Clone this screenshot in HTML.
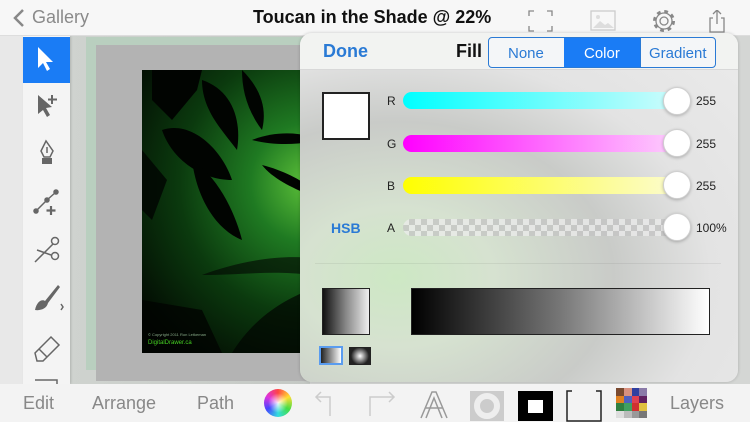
<!DOCTYPE html>
<html><head><meta charset="utf-8"><style>
*{margin:0;padding:0;box-sizing:border-box}
body{width:750px;height:422px;overflow:hidden;position:relative;background:#d4d6d4;font-family:"Liberation Sans",sans-serif}
.a{position:absolute}
.t{position:absolute;white-space:nowrap}
.track{position:absolute;left:403px;width:287px;height:17px;border-radius:9px}
.thumb{position:absolute;left:663px;width:28px;height:28px;border-radius:50%;background:#fff;border:1px solid #d0d0d0;box-shadow:0 1px 3px rgba(0,0,0,.25)}
.lbl{position:absolute;left:387px;font-size:12px;color:#222}
.val{position:absolute;left:696px;font-size:12px;color:#222}
</style></head><body>
<div class="a" style="left:70px;top:36px;width:240px;height:348px;background:linear-gradient(90deg,#cfd3cf,#c4c8c4)"></div>
<div class="a" style="left:86px;top:37px;width:220px;height:333px;background:#b9cfbf"></div>
<div class="a" style="left:96px;top:45px;width:214px;height:336px;background:#b3b3b3"></div>
<div class="a" style="left:142px;top:70px;width:168px;height:283px;background:radial-gradient(ellipse at 100% 40%,#5fc33a 0%,#1f7a22 25%,#0b3a0e 55%,#020802 90%)"></div>
<svg class="a" style="left:142px;top:70px" width="168" height="283">
<g fill="#010401">
<path d="M10 0 L60 0 L55 20 L30 50 L10 30 Z"/>
<path d="M60 10 C90 20 100 50 95 80 C80 60 60 40 60 10Z"/>
<path d="M20 60 C50 50 80 80 90 110 C60 110 30 90 20 60Z"/>
<path d="M50 90 C80 110 95 150 100 170 C75 160 55 130 50 90Z"/>
<path d="M100 0 C120 20 125 40 120 60 C105 40 100 20 100 0Z"/>
<path d="M110 70 C130 62 150 62 168 66 L168 72 C150 75 130 75 110 70Z"/>
<path d="M120 95 C140 100 160 110 168 118 L168 125 C150 118 130 108 120 95Z"/>
<path d="M0 80 L25 110 L10 150 L0 140Z" opacity=".8"/>
<path d="M60 205 C100 190 140 185 168 188 L168 205 C130 200 100 205 60 205Z" opacity=".6"/>
<path d="M90 283 C110 250 140 230 168 220 L168 283Z" opacity=".7"/>
<path d="M0 230 L60 240 L80 283 L0 283Z" opacity=".8"/>
</g>
<text x="6" y="266" font-size="4" fill="#8a8">© Copyright 2011 Ron Letkeman</text>
<text x="6" y="274" font-size="6" fill="#4c2">DigitalDrawer.ca</text>
</svg>
<div class="a" style="left:0;top:36px;width:23px;height:348px;background:#e8e8e8"></div>
<div class="a" style="left:23px;top:36px;width:47px;height:348px;background:#f4f4f4;box-shadow:1px 0 2px rgba(0,0,0,.15)"></div>
<div class="a" style="left:23px;top:37px;width:47px;height:46px;background:#1a7cf5"></div>
<svg class="a" style="left:23px;top:37px" width="47" height="348" fill="none" stroke="#666" stroke-width="1.5">
<path d="M15 10 L15 31 L20 26 L24 34 L27 32 L23 25 L30 25 Z" fill="#fff" stroke="none"/>
<path d="M15 58 L15 77 L20 73 L24 80 L27 78 L23 71 L29 70 Z" fill="#666" stroke="none"/>
<path d="M29 58v9M25 62.5h9" stroke="#666" stroke-width="2"/>
<path d="M23 104 L18 114 L21 120 L27 120 L30 114 Z M24 110v6"/><rect x="19" y="121" width="10" height="6" fill="#666" stroke="none"/>
<path d="M13 174 L24 163 L33 155"/><circle cx="13" cy="174" r="2" fill="#666"/><circle cx="24" cy="163" r="2" fill="#666"/><circle cx="33" cy="155" r="2" fill="#666"/>
<path d="M28 169v9M23.5 173.5h9" stroke="#666" stroke-width="2.2"/>
<path d="M12 225 L30 207 M14 213 L28 218" /><circle cx="32" cy="204" r="3.5"/><circle cx="32" cy="219" r="3.5"/>
<path d="M12 273 C14 264 19 262 22 264 L35 248 L37 250 L25 266 C24 271 18 274 12 273Z" fill="#666" stroke="none"/>
<path d="M38 267l2 3-2 3" />
<path d="M12 316 L28 300 L36 308 L20 324 L14 324 Z M16 312l8 8" />
<path d="M12 343h22v6" />
</svg>
<div class="a" style="left:0;top:0;width:750px;height:36px;background:#f7f7f7;border-bottom:1px solid #ddd"></div>
<svg class="a" style="left:12px;top:8px" width="14" height="20"><path d="M11 2 L3 10 L11 18" fill="none" stroke="#888" stroke-width="2.5"/></svg>
<div class="t" style="left:32px;top:7px;font-size:18px;color:#8a8a8a">Gallery</div>
<div class="t" style="left:253px;top:7px;font-size:18px;font-weight:bold;color:#111">Toucan in the Shade @ 22%</div>
<svg class="a" style="left:528px;top:10px" width="200" height="24" fill="none" stroke="#888" stroke-width="1.3">
<path d="M1 6V1h5M19 1h5v5M24 16v5h-5M6 21H1v-5"/>
<rect x="63" y="1" width="24" height="19" stroke="#ccc"/><path d="M65 18l7-7 5 4 3-2 6 5z" fill="#ddd" stroke="none"/><circle cx="70" cy="7" r="2" fill="#ddd" stroke="none"/>
<circle cx="136" cy="11" r="9.5" stroke-width="3" stroke-dasharray="3.7 3.76"/><circle cx="136" cy="11" r="8"/><circle cx="136" cy="11" r="4"/>
<path d="M185 8h-3v14h14V8h-3M189 14V0M185 4l4-4 4 4"/>
</svg>
<div class="a" style="left:300px;top:33px;width:438px;height:349px;border-radius:12px;overflow:hidden;background:radial-gradient(ellipse at 22% 70%,#cde8c4 0%,#d6e2d0 20%,#c9cbc8 45%,#e3e3e3 65%,#ebebeb 100%);box-shadow:0 0 3px rgba(0,0,0,.2)">
<div class="a" style="left:0;top:0;width:438px;height:37px;background:#f2f3f1;border-bottom:1px solid #d8d8d8"></div>
</div>
<div class="t" style="left:323px;top:41px;font-size:18px;font-weight:bold;color:#2a7ad5">Done</div>
<div class="t" style="left:456px;top:41px;font-size:18px;font-weight:bold;color:#111">Fill</div>
<div class="a" style="left:488px;top:37px;width:228px;height:31px;border:1px solid #2a7ad5;border-radius:4px;overflow:hidden;background:#f4f6f8">
<div class="a" style="left:75px;top:0;width:77px;height:31px;background:#1a7cf5"></div>
<div class="a" style="left:151px;top:0;width:1px;height:31px;background:#2a7ad5"></div>
<div class="t" style="left:19px;top:7px;font-size:15px;color:#2a7ad5">None</div>
<div class="t" style="left:95px;top:7px;font-size:15px;color:#fff">Color</div>
<div class="t" style="left:160px;top:7px;font-size:15px;color:#2a7ad5">Gradient</div>
</div>
<div class="a" style="left:322px;top:92px;width:48px;height:48px;background:#fff;border:2px solid #222"></div>
<div class="lbl" style="top:94px">R</div><div class="lbl" style="top:137px">G</div><div class="lbl" style="top:179px">B</div><div class="lbl" style="top:221px">A</div>
<div class="track" style="top:92px;background:linear-gradient(90deg,#0ff,#d8fbfb)"></div>
<div class="track" style="top:135px;background:linear-gradient(90deg,#f0f,#fdd8fd)"></div>
<div class="track" style="top:177px;background:linear-gradient(90deg,#ff0,#fbfbd8)"></div>
<div class="track" style="top:219px;background-color:#ececec;background-image:linear-gradient(45deg,#c4c4c4 25%,transparent 25%,transparent 75%,#c4c4c4 75%),linear-gradient(45deg,#c4c4c4 25%,transparent 25%,transparent 75%,#c4c4c4 75%);background-size:12px 12px;background-position:0 0,6px 6px;opacity:.75"></div>
<div class="thumb" style="top:87px"></div><div class="thumb" style="top:129px"></div><div class="thumb" style="top:171px"></div><div class="thumb" style="top:213px"></div>
<div class="val" style="top:94px">255</div><div class="val" style="top:137px">255</div><div class="val" style="top:179px">255</div><div class="val" style="top:221px">100%</div>
<div class="t" style="left:331px;top:220px;font-size:14px;font-weight:bold;color:#2a7ad5">HSB</div>
<div class="a" style="left:315px;top:263px;width:406px;height:1px;background:rgba(0,0,0,.06)"></div>
<div class="a" style="left:322px;top:288px;width:48px;height:47px;border:1px solid #222;background:linear-gradient(90deg,#111,#888,#eee)"></div>
<div class="a" style="left:411px;top:288px;width:299px;height:47px;border:1px solid #222;background:linear-gradient(90deg,#000,#777 50%,#fff)"></div>
<div class="a" style="left:319px;top:346px;width:24px;height:19px;border:2px solid #5a9cef;background:linear-gradient(90deg,#222,#fff)"></div>
<div class="a" style="left:349px;top:347px;width:22px;height:18px;border:1px solid #222;background:radial-gradient(circle,#fff,#222 70%)"></div>
<div class="a" style="left:0;top:384px;width:750px;height:38px;background:#f3f3f3"></div>
<div class="t" style="left:23px;top:393px;font-size:18px;color:#888">Edit</div>
<div class="t" style="left:92px;top:393px;font-size:18px;color:#888">Arrange</div>
<div class="t" style="left:197px;top:393px;font-size:18px;color:#888">Path</div>
<div class="a" style="left:264px;top:389px;width:28px;height:28px;border-radius:50%;background:conic-gradient(#f44,#fd3,#4d4,#3dd,#44f,#d3d,#f44)"></div>
<div class="a" style="left:268px;top:393px;width:20px;height:20px;border-radius:50%;background:radial-gradient(circle,rgba(255,255,255,.9),rgba(255,255,255,0) 70%)"></div>
<svg class="a" style="left:310px;top:388px" width="340" height="34" fill="none" stroke="#ccc" stroke-width="1.5">
<path d="M20 28V9H6M11 4L6 9l5 5"/><path d="M60 28V9h24M79 4l5 5-5 5"/>
<path d="M111 30L122 4h4l11 26M115 20h18M116 30l8-20 8 20" stroke="#999"/>
<rect x="160" y="3" width="34" height="30" fill="#ccc" stroke="none"/><circle cx="177" cy="18" r="10" fill="none" stroke="#eee" stroke-width="6"/>
<rect x="208" y="3" width="35" height="30" fill="#000" stroke="none"/><rect x="218" y="12" width="15" height="13" fill="#fff" stroke="none"/>
<path d="M262 3h-5v30h34V3h-5" stroke="#222"/>
</svg>
<div class="a" style="left:616px;top:388px;width:31px;height:30px;display:grid;grid-template-columns:repeat(4,1fr)">
<i style="background:#7a4a30"></i><i style="background:#d89080"></i><i style="background:#3040a0"></i><i style="background:#8a7aa8"></i>
<i style="background:#e08020"></i><i style="background:#5060c0"></i><i style="background:#e04050"></i><i style="background:#602060"></i>
<i style="background:#308040"></i><i style="background:#40a060"></i><i style="background:#d03030"></i><i style="background:#e0c040"></i>
<i style="background:#ddd"></i><i style="background:#bbb"></i><i style="background:#999"></i><i style="background:#777"></i>
</div>
<div class="t" style="left:670px;top:393px;font-size:18px;color:#888">Layers</div>
</body></html>
